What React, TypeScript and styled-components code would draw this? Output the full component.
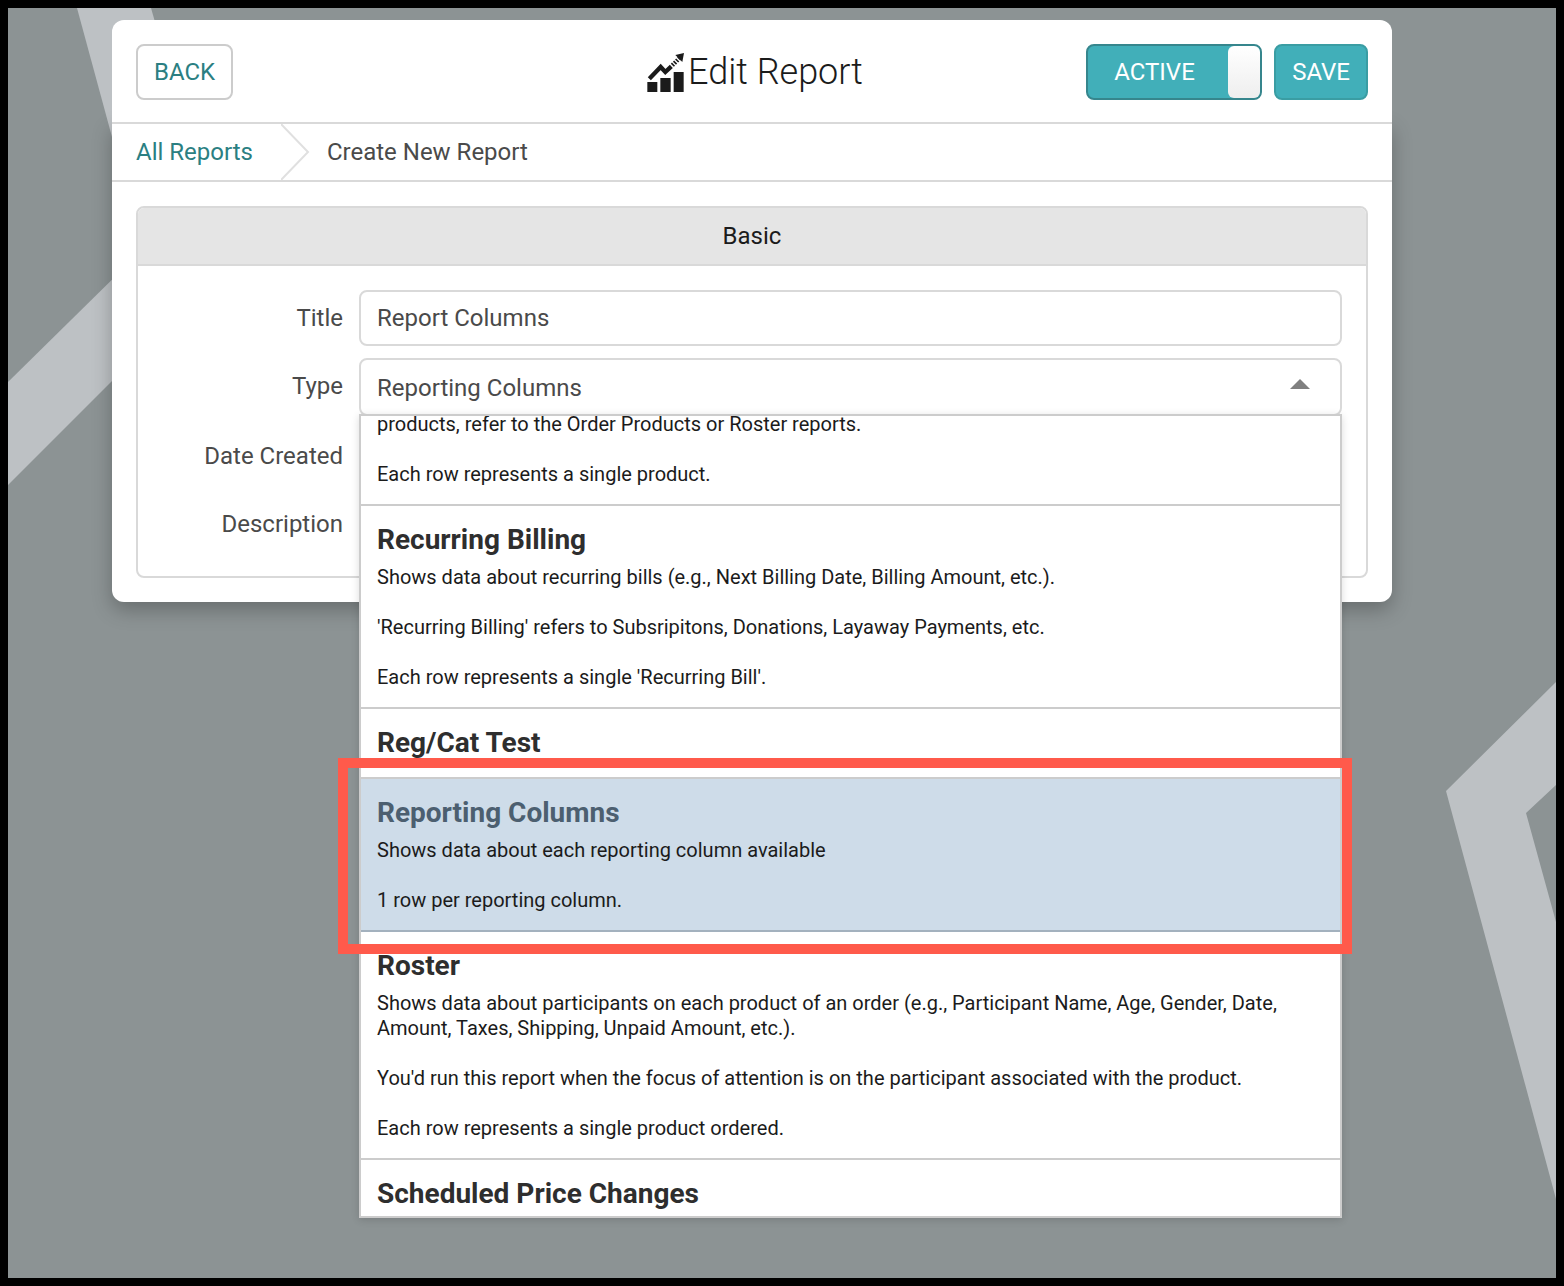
import React, { useLayoutEffect, useRef } from "react";
import styled, { createGlobalStyle, css } from "styled-components";

const GlobalStyle = createGlobalStyle`
  *, *::before, *::after { box-sizing: border-box; }
  body {
    margin: 0;
    font-family: Roboto, "Liberation Sans", sans-serif;
    font-size: 24px;
    line-height: 28px;
    color: #1b1b1b;
  }
`;

const Page = styled.div`
  position: relative;
  min-height: 100vh;
  border: 8px solid #000;
  padding: 12px 164px 12px 104px;
  background: #8c9394;
`;

const Backdrop = styled.div`
  position: absolute;
  inset: 0;
  display: flex;
  justify-content: space-between;
  overflow: hidden;
`;

const Shape = styled.svg`
  flex: none;
  fill: #bdc1c4;
`;

const Card = styled.main`
  position: relative;
`;

const Header = styled.header`
  position: relative;
  z-index: 1;
  display: grid;
  grid-template-columns: 1fr auto 1fr;
  align-items: center;
  padding: 24px 24px 22px;
  background: #fff;
  border-radius: 12px 12px 0 0;
`;

const Heading = styled.h1`
  display: flex;
  align-items: center;
  gap: 4px;
  margin: 0;
  padding-left: 6px;
  font-size: 36px;
  font-weight: 300;
  line-height: 44px;
`;

const Actions = styled.div`
  display: flex;
  justify-content: flex-end;
  gap: 12px;
`;

const Button = styled.button<{ $primary?: boolean }>`
  justify-self: start;
  height: 56px;
  padding: 0 16px;
  border: 2px solid #ccc;
  border-radius: 8px;
  background: #fff;
  color: #2b7f82;
  font: inherit;
  cursor: pointer;
  ${(p) =>
    p.$primary &&
    css`
      border-color: #3a9da3;
      background: #41afb9;
      color: #fff;
    `}
`;

const Toggle = styled.label`
  position: relative;
  display: flex;
  align-items: center;
  width: 176px;
  height: 56px;
  border: 2px solid #36868d;
  border-radius: 8px;
  background: #41afb9;
  color: #fff;
  cursor: pointer;
`;

const ToggleInput = styled.input`
  position: absolute;
  inset: 0;
  margin: 0;
  opacity: 0;
`;

const ToggleText = styled.span`
  flex: 1;
  padding-left: 26px;
`;

const Knob = styled.span`
  width: 32px;
  height: 52px;
  border-radius: 6px;
  background: linear-gradient(#fff, #eee);
`;

const Body = styled.div`
  background: #fff;
  border-radius: 0 0 12px 12px;
  box-shadow: 0 8px 20px rgba(0, 0, 0, 0.26);
`;

const Breadcrumb = styled.nav`
  display: flex;
  align-items: center;
  height: 60px;
  padding-left: 24px;
  border: solid #d9d9d9;
  border-width: 2px 0;
  color: #4a4a4a;
`;

const Crumb = styled.a`
  color: #2b7f82;
  text-decoration: none;
`;

const Chevron = styled.svg`
  margin: 0 17px 0 28px;
  fill: none;
  stroke: #e0e0e0;
  stroke-width: 2;
`;

const Content = styled.div`
  padding: 24px;
`;

const Panel = styled.section`
  border: 2px solid #d9d9d9;
  border-radius: 8px;
`;

const PanelTitle = styled.h2`
  margin: 0;
  padding: 14px;
  border-bottom: 2px solid #d9d9d9;
  border-radius: 6px 6px 0 0;
  background: #e5e5e5;
  font-size: 24px;
  font-weight: 400;
  line-height: 28px;
  text-align: center;
`;

const Form = styled.form`
  display: grid;
  gap: 12px;
  padding: 24px;
`;

const Row = styled.div`
  display: grid;
  grid-template-columns: 181px 1fr;
  column-gap: 16px;
`;

const Label = styled.label`
  padding-top: 14px;
  color: #4a4a4a;
  text-align: right;
`;

const Field = styled.div`
  position: relative;
`;

const control = css`
  display: block;
  width: 100%;
  padding: 0 16px;
  border: 2px solid #d9d9d9;
  border-radius: 8px;
  background: #fff;
  color: #4a4a4a;
  font: inherit;
`;

const TextInput = styled.input`
  ${control}
  height: 56px;
`;

const Select = styled.select`
  ${control}
  height: 58px;
  padding-top: 2px;
  appearance: none;
`;

const Arrow = styled.svg`
  position: absolute;
  top: 21px;
  right: 32px;
  fill: #808080;
  pointer-events: none;
`;

const Popup = styled.div`
  position: absolute;
  z-index: 2;
  top: 56px;
  left: 0;
  right: 0;
`;

const List = styled.ul`
  height: 804px;
  margin: 0;
  padding: 0;
  overflow-y: auto;
  scrollbar-width: none;
  list-style: none;
  border: 2px solid #ccc;
  background: #fff;
  box-shadow: 0 2px 8px rgba(0, 0, 0, 0.14);
`;

const Option = styled.li<{ $selected?: boolean }>`
  padding: 16px 16px 17px;
  border-bottom: 2px solid ${(p) => (p.$selected ? "#a3b1be" : "#ccc")};
  background: ${(p) => (p.$selected ? "#cedce9" : "#fff")};
`;

const OptionName = styled.div<{ $selected?: boolean }>`
  color: ${(p) => (p.$selected ? "#4c5f70" : "#2e2e2e")};
  font-size: 28px;
  font-weight: 700;
  line-height: 35px;
`;

const OptionText = styled.div`
  padding-top: 8px;
  font-size: 20px;
  line-height: 25px;
  white-space: pre-line;
`;

const Callout = styled.div`
  position: absolute;
  top: 344px;
  left: -21px;
  right: -10px;
  height: 196px;
  border: 10px solid #ff5a4b;
  pointer-events: none;
`;

interface ReportType {
  name?: string;
  text?: string;
}

const types: ReportType[] = [
  {
    text: "products, refer to the Order Products or Roster reports.\n\nEach row represents a single product.",
  },
  {
    name: "Recurring Billing",
    text: "Shows data about recurring bills (e.g., Next Billing Date, Billing Amount, etc.).\n\n'Recurring Billing' refers to Subsripitons, Donations, Layaway Payments, etc.\n\nEach row represents a single 'Recurring Bill'.",
  },
  { name: "Reg/Cat Test" },
  {
    name: "Reporting Columns",
    text: "Shows data about each reporting column available\n\n1 row per reporting column.",
  },
  {
    name: "Roster",
    text: "Shows data about participants on each product of an order (e.g., Participant Name, Age, Gender, Date, Amount, Taxes, Shipping, Unpaid Amount, etc.).\n\nYou'd run this report when the focus of attention is on the participant associated with the product.\n\nEach row represents a single product ordered.",
  },
  { name: "Scheduled Price Changes" },
];

const selectedType = "Reporting Columns";
const initialScroll = 28;

function ReportIcon() {
  return (
    <svg width="37" height="39" viewBox="79 67 111 117" fill="#1b1b1b" aria-hidden="true">
      <path d="M80 154h30v30H80zM119 142h31v42h-31zM159 124h30v60h-30z" />
      <path d="M86 144 120 109 134 124 152 107" fill="none" stroke="#1b1b1b" strokeWidth="13" />
      <path d="M155 104 176 83" fill="none" stroke="#1b1b1b" strokeWidth="13" strokeDasharray="5 4" />
      <path d="M164 73 190 67 185 94z" />
    </svg>
  );
}

function TypeList() {
  const list = useRef<HTMLUListElement>(null);
  useLayoutEffect(() => {
    if (list.current) list.current.scrollTop = initialScroll;
  }, []);
  return (
    <List ref={list} role="listbox" aria-label="Report types">
      {types.map((type, i) => {
        const selected = type.name === selectedType;
        return (
          <Option key={i} role="option" aria-selected={selected} $selected={selected}>
            {type.name && <OptionName $selected={selected}>{type.name}</OptionName>}
            {type.text && <OptionText>{type.text}</OptionText>}
          </Option>
        );
      })}
    </List>
  );
}

export default function App() {
  return (
    <Page>
      <GlobalStyle />
      <Backdrop aria-hidden="true">
        <Shape width="400" height="600">
          <path d="M69 0h74l40 140H107z" />
          <path d="M0 374 124 252V353L0 477z" />
        </Shape>
        <Shape width="110" height="1270">
          <path d="M110 674 0 783 110 1191V914L80 805 110 777z" />
        </Shape>
      </Backdrop>
      <Card>
        <Header>
          <Button type="button">BACK</Button>
          <Heading>
            <ReportIcon />
            Edit Report
          </Heading>
          <Actions>
            <Toggle>
              <ToggleInput type="checkbox" defaultChecked />
              <ToggleText>ACTIVE</ToggleText>
              <Knob />
            </Toggle>
            <Button type="button" $primary>
              SAVE
            </Button>
          </Actions>
        </Header>
        <Body>
          <Breadcrumb aria-label="Breadcrumb">
            <Crumb href="#reports">All Reports</Crumb>
            <Chevron width="29" height="56" aria-hidden="true">
              <path d="M0 0 27 28 0 56" />
            </Chevron>
            <span aria-current="page">Create New Report</span>
          </Breadcrumb>
          <Content>
            <Panel>
              <PanelTitle>Basic</PanelTitle>
              <Form>
                <Row>
                  <Label htmlFor="title">Title</Label>
                  <TextInput id="title" defaultValue="Report Columns" />
                </Row>
                <Row>
                  <Label htmlFor="type">Type</Label>
                  <Field>
                    <Select id="type" defaultValue={selectedType}>
                      <option>{selectedType}</option>
                    </Select>
                    <Arrow width="20" height="10" aria-hidden="true">
                      <path d="M0 10 10 0 20 10z" />
                    </Arrow>
                    <Popup>
                      <TypeList />
                      <Callout />
                    </Popup>
                  </Field>
                </Row>
                <Row>
                  <Label htmlFor="created">Date Created</Label>
                  <TextInput id="created" />
                </Row>
                <Row>
                  <Label htmlFor="description">Description</Label>
                  <TextInput id="description" />
                </Row>
              </Form>
            </Panel>
          </Content>
        </Body>
      </Card>
    </Page>
  );
}
